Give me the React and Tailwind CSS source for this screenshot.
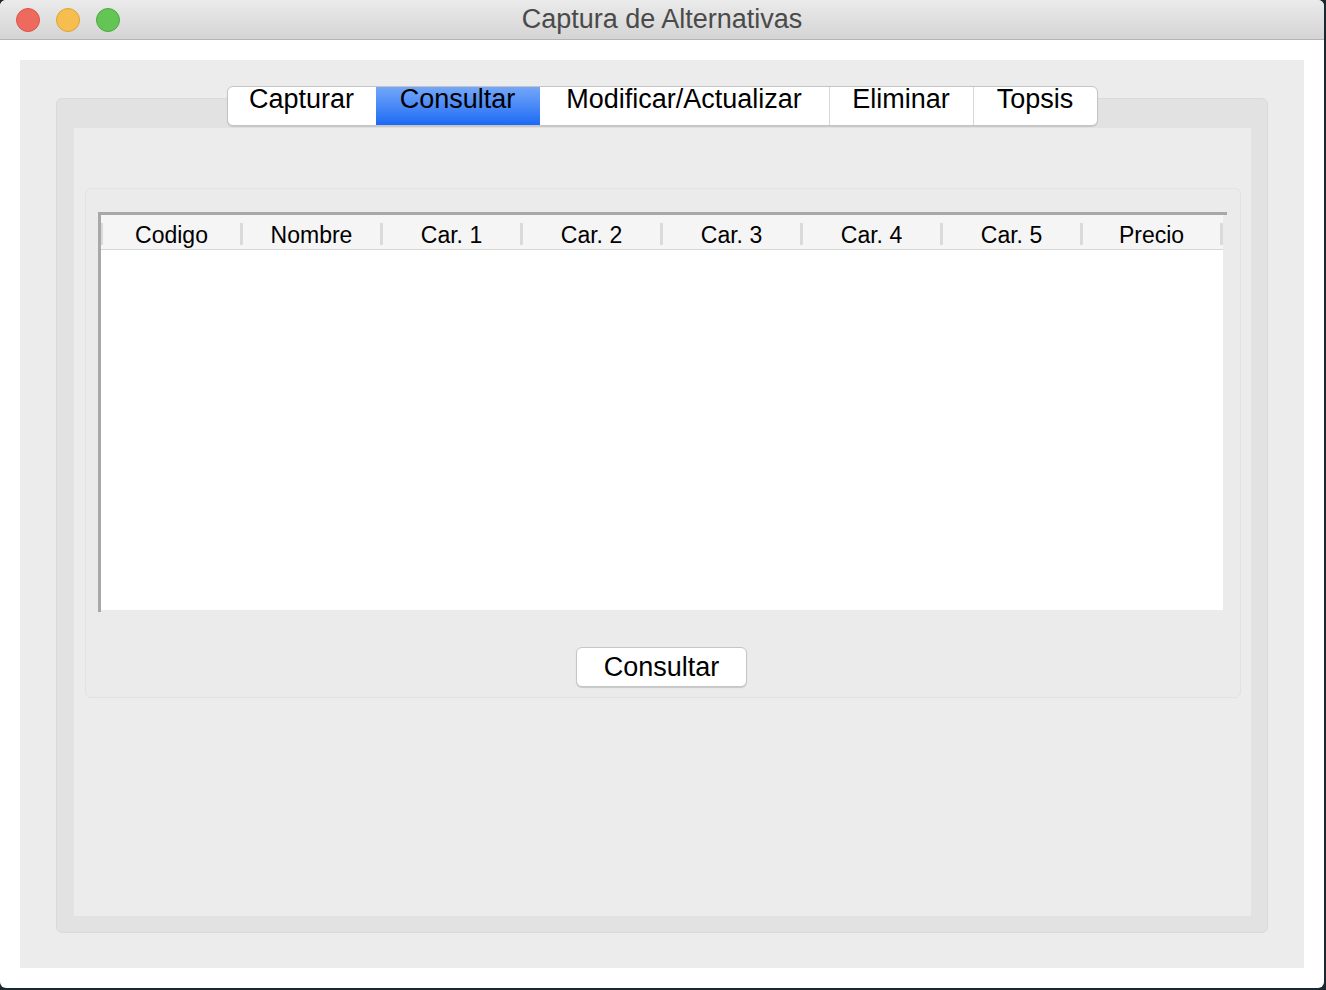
import React from 'react';

const tabs = [
  { label: 'Capturar', w: 'w-[148px]' },
  { label: 'Consultar', w: 'w-[164px]', active: true },
  { label: 'Modificar/Actualizar', w: 'w-[289px]' },
  { label: 'Eliminar', w: 'w-[144px]' },
  { label: 'Topsis', w: 'w-[124px]' },
];

const columns = ['Codigo', 'Nombre', 'Car. 1', 'Car. 2', 'Car. 3', 'Car. 4', 'Car. 5', 'Precio'];

const App = () => {
  return (
    <div
      className="w-[1326px] h-[990px] bg-[#1b2830] overflow-hidden"
      style={{ fontFamily: '"Liberation Sans", Arial, sans-serif' }}
    >
      <div className="w-[1324px] h-[988px] bg-white rounded-[6px] overflow-hidden flex flex-col">
        {/* Title bar */}
        <div className="h-[40px] shrink-0 bg-gradient-to-b from-[#ebebeb] to-[#d4d4d4] border-b border-[#b4b4b4] flex items-center relative">
          <div className="flex items-center gap-[16px] pl-[16px]">
            <span className="w-[24px] h-[24px] rounded-full bg-[#ee6a5f] border border-[#d8574c]" />
            <span className="w-[24px] h-[24px] rounded-full bg-[#f6be4f] border border-[#dea33a]" />
            <span className="w-[24px] h-[24px] rounded-full bg-[#62c554] border border-[#50a944]" />
          </div>
          <div className="absolute inset-0 flex items-center justify-center text-[27px] text-[#4a4a4a] pointer-events-none">
            Captura de Alternativas
          </div>
        </div>

        {/* Window body */}
        <div className="flex-1 p-[20px]">
          <div className="h-full bg-[#ececec] px-[36px] pt-[26px] pb-[35px] flex flex-col">
            {/* Tabs */}
            <div className="relative z-10 flex justify-center">
              <div className="flex h-[40px] bg-white border border-[#c4c4c4] rounded-[6px] shadow-[0_1px_1px_rgba(0,0,0,0.12)]">
                {tabs.map((t, i) => (
                  <div
                    key={t.label}
                    className={`${t.w} flex justify-center text-[27px] leading-[27px] text-black ${
                      t.active ? 'bg-gradient-to-b from-[#73a6f8] to-[#1a69f5]' : ''
                    } ${i > 0 && !t.active && !tabs[i - 1].active ? 'border-l border-[#d8d8d8]' : ''} ${
                      i === 0 ? 'rounded-l-[5px]' : ''
                    } ${i === tabs.length - 1 ? 'rounded-r-[5px]' : ''}`}
                  >
                    <span className="-mt-[1px]">{t.label}</span>
                  </div>
                ))}
              </div>
            </div>

            {/* Tab pane */}
            <div className="flex-1 -mt-[28px] bg-[#e2e2e2] border border-[#dadada] rounded-[6px] pt-[29px] px-[17px] pb-[16px] flex">
              <div className="flex-1 bg-[#ececec] pt-[60px] pl-[11px] pr-[10px]">
                {/* Group box */}
                <div className="h-[510px] border border-[#e2e2e2] rounded-[6px] bg-[#ebebeb] pt-[23px] pl-[12px] pr-[13px] flex flex-col items-stretch">
                  {/* Table */}
                  <div className="h-[400px] border-t-[3px] border-l-[3px] border-[#a8a8a8] flex flex-col">
                    <div className="flex-1 mr-[4px] mb-[2px] bg-white flex flex-col">
                      <div className="h-[35px] shrink-0 bg-[#f5f5f5] border-b border-[#d6d6d6] flex items-center overflow-hidden">
                        <span className="w-[2px] h-[22px] mt-[4px] bg-[#dadada] shrink-0" />
                        {columns.map((c) => (
                          <div key={c} className="w-[140px] shrink-0 flex items-center">
                            <span className="flex-1 text-center text-[23px] leading-[26px] pt-[5px] text-black">{c}</span>
                            <span className="w-[3px] h-[22px] mt-[4px] bg-[#dadada] shrink-0" />
                          </div>
                        ))}
                      </div>
                      <div className="flex-1 bg-white" />
                    </div>
                  </div>
                  <div className="flex justify-center pt-[35px] pr-[2px]">
                    <button className="w-[171px] h-[40px] bg-white border border-[#c6c6c6] rounded-[6px] shadow-[0_1px_1px_rgba(0,0,0,0.15)] text-[27px] leading-[27px] text-black">
                      Consultar
                    </button>
                  </div>
                </div>
              </div>
            </div>
          </div>
        </div>
      </div>
    </div>
  );
};

export default App;
